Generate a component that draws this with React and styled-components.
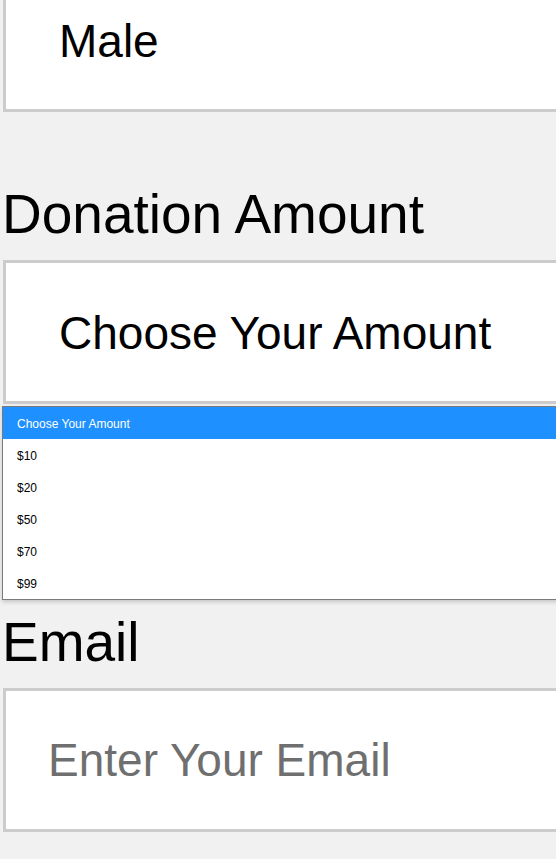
import React from 'react';
import styled, { createGlobalStyle } from 'styled-components';

const GlobalStyle = createGlobalStyle`
    html, body {
        margin: 0;
        padding: 0;
        background: #f1f1f1;
        overflow: hidden;
    }
    body {
        font-family: "Liberation Sans", Arial, sans-serif;
        color: #000;
    }
`;

const Form = styled.form`
    width: 680px;
    padding-left: 3px;
    margin-top: -32px;
`;

const Group = styled.div`
    position: relative;
    margin-top: ${(p) => p.gap || 0}px;
`;

const Label = styled.label`
    display: block;
    font-size: 55px;
    line-height: 64px;
    margin: 0 0 14px -1px;
`;

const SelectBox = styled.div`
    box-sizing: border-box;
    height: 144px;
    display: flex;
    align-items: center;
    padding: 2px 0 0 53px;
    background: #fff;
    border: 3px solid #cccccc;
    font-size: 46px;
`;

const TextInput = styled.input`
    display: block;
    box-sizing: border-box;
    width: 100%;
    height: 144px;
    padding: 0 0 0 42px;
    margin: 0;
    background: #fff;
    border: 3px solid #cccccc;
    outline: none;
    font-family: "Liberation Sans", Arial, sans-serif;
    font-size: 46px;
    color: #000;

    &::placeholder {
        color: #6f6f6f;
    }
`;

const Popup = styled.ul`
    position: absolute;
    left: -1px;
    top: calc(100% + 2px);
    width: 100%;
    list-style: none;
    margin: 0;
    padding: 0;
    background: #fff;
    border: 1px solid #7a7a7a;
    box-shadow: 0 2px 4px rgba(0, 0, 0, 0.18);
    z-index: 2;
`;

const Option = styled.li`
    height: 32px;
    display: flex;
    align-items: center;
    padding: 1px 0 0 14px;
    box-sizing: border-box;
    font-size: 12px;
    background: ${(p) => (p.selected ? '#1e90ff' : '#fff')};
    color: ${(p) => (p.selected ? '#fff' : '#000')};
`;

const amounts = ['Choose Your Amount', '$10', '$20', '$50', '$70', '$99'];

const App = () => {
    return (
        <>
            <GlobalStyle />
            <Form onSubmit={(e) => e.preventDefault()}>
                <Group>
                    <SelectBox>Male</SelectBox>
                </Group>

                <Group gap={70}>
                    <Label>Donation Amount</Label>
                    <Group>
                        <SelectBox>Choose Your Amount</SelectBox>
                        <Popup>
                            {amounts.map((a, i) => (
                                <Option key={a} selected={i === 0}>{a}</Option>
                            ))}
                        </Popup>
                    </Group>
                </Group>

                <Group gap={206}>
                    <Label>Email</Label>
                    <TextInput type="email" placeholder="Enter Your Email" />
                </Group>
            </Form>
        </>
    );
};

export default App;
